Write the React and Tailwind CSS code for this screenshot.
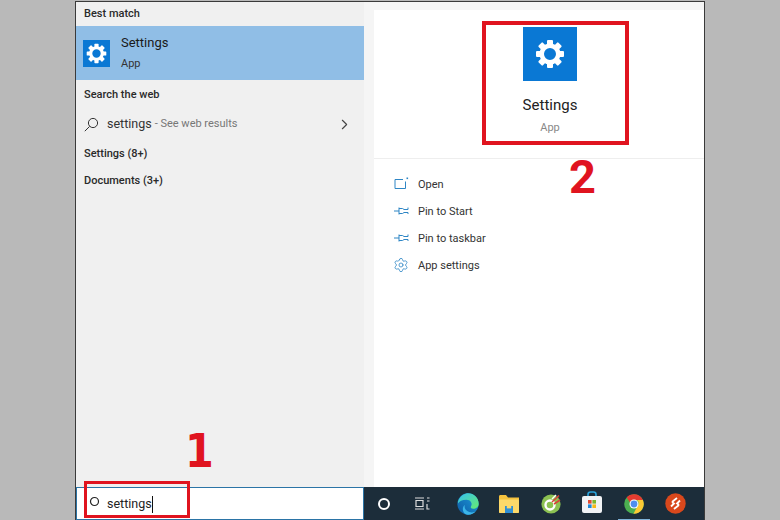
import React from 'react';
import { Settings, ChevronRight } from 'lucide-react';

const font = { fontFamily: 'Roboto, "Open Sans", sans-serif' };

// filled white windows gear
const Gear = ({ size }) => (
  <svg width={size} height={size} viewBox="0 0 24 24">
    {[0, 45, 90, 135, 180, 225, 270, 315].map((a) => (
      <rect key={a} x="9.6" y="0.8" width="4.8" height="5" rx="0.8" fill="#fff" transform={`rotate(${a} 12 12)`} />
    ))}
    <circle cx="12" cy="12" r="6.6" fill="none" stroke="#fff" strokeWidth="3.6" />
  </svg>
);

const OpenIcon = () => (
  <svg width="15" height="13" viewBox="0 0 15 13" fill="none" stroke="#2f86c5" strokeWidth="1">
    <path d="M11.5 4.5V11.5H1V2.5H9" />
    <rect x="12.5" y="0.5" width="1.6" height="1.6" fill="#2f86c5" stroke="none" />
  </svg>
);

const PinIcon = () => (
  <svg width="15" height="10" viewBox="0 0 15 10" fill="none" stroke="#2f86c5" strokeWidth="1">
    <path d="M0 5H5M5 1.5V8.5M5 2.5H8.5L10 3.5H14V1.5M5 7.5H8.5L10 6.5H14V8" />
  </svg>
);

const ActionRow = ({ icon, label }) => (
  <div className="flex items-center h-[27px]">
    <div className="w-[24px] flex justify-center -mt-1 shrink-0">{icon}</div>
    <span className="ml-[5px] text-[11px] text-[#333]">{label}</span>
  </div>
);

const Edge = () => (
  <svg width="22" height="22" viewBox="0 0 21 21">
    <defs>
      <linearGradient id="edgeA" x1="0" y1="1" x2="1" y2="0">
        <stop offset="0" stopColor="#0c59a4" />
        <stop offset="1" stopColor="#1fa0de" />
      </linearGradient>
      <linearGradient id="edgeB" x1="0" y1="0" x2="1" y2="1">
        <stop offset="0" stopColor="#35c1f1" />
        <stop offset="1" stopColor="#66eb6e" />
      </linearGradient>
    </defs>
    <circle cx="10.5" cy="10.5" r="10.2" fill="url(#edgeA)" />
    <path d="M1 8C3 2 8 .3 10.5 .3 16 .3 20.7 4.5 20.7 10.5 20.7 13.5 18 15 15.5 15 13.5 15 12.5 14 13.5 12.5 15 10 13 6.5 9 6.5 5 6.5 2 8 1 10Z" fill="url(#edgeB)" />
    <path d="M9 20.5C5 19 4.5 13.5 7.5 11.5 6.5 15 9.5 18.5 14 18.5 16 18.5 17 18 18 17.5 15.5 20.5 12 21.2 9 20.5Z" fill="#3bb5e8" />
  </svg>
);

const Explorer = () => (
  <svg width="20" height="18" viewBox="0 0 20 18">
    <path d="M0 1.5C0 .7.6 0 1.4 0H7L9 2.5H20V16.5C20 17.3 19.4 18 18.6 18H1.4C.6 18 0 17.3 0 16.5Z" fill="#f4c23e" />
    <rect x="0" y="4.5" width="20" height="13.5" rx="1" fill="#fcd96a" />
    <rect x="6" y="11" width="8" height="7" fill="#2f8fd6" />
    <rect x="7.8" y="11" width="4.4" height="2.4" fill="#fcd96a" />
  </svg>
);

const Ccleaner = () => (
  <svg width="20" height="20" viewBox="0 0 20 20">
    <circle cx="10" cy="10" r="9.6" fill="#8cc152" />
    <circle cx="9" cy="11" r="4.5" fill="none" stroke="#fff" strokeWidth="2.4" />
    <path d="M11 8L18 1.5M13 10L19 6" stroke="#d8433a" strokeWidth="1.6" />
    <path d="M11 5L15 1" stroke="#fff" strokeWidth="1.4" />
  </svg>
);

const Store = () => (
  <svg width="20" height="22" viewBox="0 0 20 22">
    <path d="M6 6V3.5C6 2 7 1 8.5 1H11.5C13 1 14 2 14 3.5V6" fill="none" stroke="#29a3dc" strokeWidth="1.6" />
    <rect x="0" y="5" width="20" height="17" rx="2" fill="#f1f3f5" />
    <rect x="6" y="9" width="3.6" height="3.6" fill="#e2492f" />
    <rect x="10.4" y="9" width="3.6" height="3.6" fill="#7ab72e" />
    <rect x="6" y="13.4" width="3.6" height="3.6" fill="#1f88d9" />
    <rect x="10.4" y="13.4" width="3.6" height="3.6" fill="#f7b917" />
  </svg>
);

const Chrome = () => (
  <svg width="20" height="20" viewBox="0 0 20 20">
    <circle cx="10" cy="10" r="9.8" fill="#4caf50" />
    <path d="M10 .2A9.8 9.8 0 0 1 18.9 6H10A4 4 0 0 0 6.2 8.8L2.7 3.4A9.8 9.8 0 0 1 10 .2Z" fill="#e53b30" />
    <path d="M18.9 6A9.8 9.8 0 0 1 9.5 19.8L13.4 12.2A4 4 0 0 0 13 6Z" fill="#fcc934" />
    <circle cx="10" cy="10" r="4.5" fill="#fff" />
    <circle cx="10" cy="10" r="3.4" fill="#4f8ef0" />
  </svg>
);

const Remote = () => (
  <svg width="21" height="21" viewBox="0 0 21 21">
    <circle cx="10.5" cy="10.5" r="10.2" fill="#d9481c" />
    <path d="M7 9L12 5M9 16L14 12M6 13.5L9 10.5L7 9M15 7.5L12 10.5L14 12" fill="none" stroke="#fff" strokeWidth="1.8" />
  </svg>
);

const LeftHeading = ({ children, className }) => (
  <div className={`pl-[8px] text-[11px] font-medium text-[#2a2a2a] leading-[16px] ${className}`}>{children}</div>
);

export default function App() {
  return (
    <div style={font} className="relative w-[780px] h-[520px] overflow-hidden bg-[#b9b9b9] pt-px pl-[75px] pr-[75px]">
      <div className="flex flex-col h-[519px] border-x border-t border-[#3a3a3a] bg-[#f5f5f5]">
        <div className="flex flex-1 min-h-0">
          {/* resultados */}
          <div className="w-[288px] bg-[#f0f0f0] pt-[4px] shrink-0">
            <LeftHeading>Best match</LeftHeading>
            <div className="flex items-center mt-[4px] h-[54px] bg-[#90bee6] pl-[7px]">
              <div className="w-[27px] h-[27px] bg-[#0a78d4] flex items-center justify-center">
                <Gear size={21} />
              </div>
              <div className="ml-[11px]">
                <div className="text-[13px] leading-[18px] text-[#1a1a1a] -mt-[1px]">Settings</div>
                <div className="text-[11px] leading-[15px] mt-[4px] text-[#333]">App</div>
              </div>
            </div>
            <LeftHeading className="mt-[7px]">Search the web</LeftHeading>
            <div className="flex items-center h-[30px] mt-[6px] pl-[8px] pr-[11px]">
              <svg width="15" height="15" viewBox="0 0 15 15" fill="none" stroke="#333" strokeWidth="1">
                <circle cx="9" cy="6" r="4.6" />
                <path d="M5.6 9.4L.8 14.2" />
              </svg>
              <span className="ml-[8px] text-[12.5px] text-[#333]">settings</span>
              <span className="ml-[3px] text-[11px] text-[#777] mt-px">- See web results</span>
              <ChevronRight size={17} strokeWidth={1.6} className="ml-auto text-[#444]" />
            </div>
            <LeftHeading className="mt-[7px]">Settings (8+)</LeftHeading>
            <LeftHeading className="mt-[11px]">Documents (3+)</LeftHeading>
          </div>

          {/* detalhe */}
          <div className="flex-1 pl-[10px] pt-[8px]">
            <div className="h-full bg-white">
              <div className="flex flex-col items-center h-[149px] border-b border-[#eeeeee] pt-[17px] pl-[22px]">
                <div className="w-[54px] h-[54px] bg-[#0a78d4] flex items-center justify-center">
                  <Gear size={30} />
                </div>
                <div className="mt-[12px] text-[15px] leading-[24px] text-[#222]">Settings</div>
                <div className="text-[11px] leading-[16px] mt-[3px] text-[#888]">App</div>
              </div>
              <div className="pt-[13px] pl-[15px]">
                <ActionRow icon={<OpenIcon />} label="Open" />
                <ActionRow icon={<PinIcon />} label="Pin to Start" />
                <ActionRow icon={<PinIcon />} label="Pin to taskbar" />
                <ActionRow icon={<Settings size={16} strokeWidth={1.2} className="text-[#2f86c5]" />} label="App settings" />
              </div>
            </div>
          </div>
        </div>

        {/* barra de pesquisa e taskbar */}
        <div className="flex h-[33px] shrink-0">
          <div className="w-[288px] bg-white border border-[#2b74a6] flex items-center pl-[12px]">
            <svg width="11" height="11" viewBox="0 0 11 11" fill="none" stroke="#222" strokeWidth="1.2" className="-mt-[5px]">
              <circle cx="5.5" cy="5.5" r="4" />
            </svg>
            <span className="ml-[7px] mt-[2px] text-[12.5px] text-[#222]">settings</span>
            <span className="w-px h-[17px] mt-[2px] bg-[#111]" />
          </div>
          <div className="flex-1 bg-[#1c2d3a] flex items-center">
            <div className="w-[12px] h-[12px] ml-[14px] rounded-full border-2 border-white" />
            <svg width="15" height="13" viewBox="0 0 15 13" fill="none" stroke="#ddd" strokeWidth="1.2" className="ml-[25px]">
              <path d="M0 1H9M0 12H9M1 3.5H8V9.5H1ZM12 1H14.5M12 4H14.5M12 7V12H14.5" />
            </svg>
            <div className="ml-[27px]"><Edge /></div>
            <div className="ml-[20px]"><Explorer /></div>
            <div className="ml-[22px]"><Ccleaner /></div>
            <div className="ml-[21px] -mt-[3px]"><Store /></div>
            <div className="ml-[22px] relative h-full flex items-center w-[20px]">
              <Chrome />
              <div className="absolute bottom-0 -left-[6px] -right-[6px] h-[1px] bg-[#7fb3d8]" />
            </div>
            <div className="ml-[21px]"><Remote /></div>
          </div>
        </div>
      </div>

      {/* anotações vermelhas */}
      <div className="absolute left-[84px] top-[481px] w-[106px] h-[37px] border-[3px] border-[#e0141f]" />
      <div className="absolute left-[482px] top-[21px] w-[147px] h-[124px] border-4 border-[#e0141f]" />
      <div className="absolute left-[185px] top-[419px] text-[46px] leading-[64px] font-bold font-['DejaVu_Sans_Condensed'] text-[#e0141f]">1</div>
      <div className="absolute left-[569px] top-[145px] text-[47px] leading-[64px] font-bold text-[#e0141f]">2</div>
    </div>
  );
}
